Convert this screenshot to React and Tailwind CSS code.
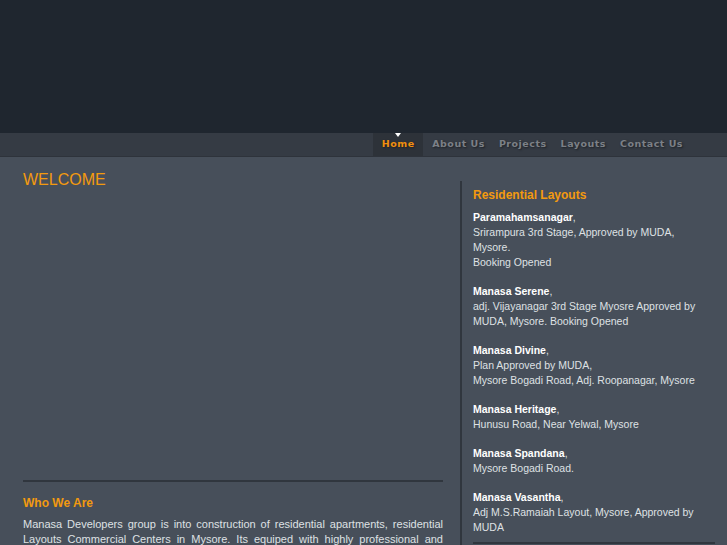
export default function App() {
  const layouts = [
    { name: 'Paramahamsanagar', lines: ['Srirampura 3rd Stage, Approved by MUDA,', 'Mysore.', 'Booking Opened'] },
    { name: 'Manasa Serene', lines: ['adj. Vijayanagar 3rd Stage Myosre Approved by MUDA, Mysore. Booking Opened'] },
    { name: 'Manasa Divine', lines: ['Plan Approved by MUDA,', 'Mysore Bogadi Road, Adj. Roopanagar, Mysore'] },
    { name: 'Manasa Heritage', lines: ['Hunusu Road, Near Yelwal, Mysore'] },
    { name: 'Manasa Spandana', lines: ['Mysore Bogadi Road.'] },
    { name: 'Manasa Vasantha', lines: ['Adj M.S.Ramaiah Layout, Mysore, Approved by MUDA'] },
  ]
  const nav = ['Home', 'About Us', 'Projects', 'Layouts', 'Contact Us']

  return (
    <div className="min-h-screen bg-[#474f5a] font-['Liberation_Sans',Arial,sans-serif]">
      <header className="h-[133px] bg-[#1f262f]" />
      <nav className="h-[24px] bg-[#353b44] border-b border-[#2e333b] flex justify-end pr-[37px]">
        {nav.map((n, i) => (
          <div
            key={n}
            className={
              'relative flex items-center h-full font-["DejaVu_Sans",sans-serif] font-bold text-[9.5px] tracking-[0.5px] [text-shadow:1px_1px_2px_#1c2026] ' +
              (i === 0 ? 'bg-[#2d3239] text-[#f0900f] w-[50px] justify-center mr-[2px]' : 'text-[#7c8086] px-[7px]')
            }
          >
            {i === 0 && (
              <span className="absolute top-0 left-1/2 -translate-x-1/2 w-0 h-0 border-l-[3px] border-r-[3px] border-t-[4px] border-l-transparent border-r-transparent border-t-white" />
            )}
            {n}
          </div>
        ))}
      </nav>
      <main className="flex">
        <section className="w-[460px] pl-[23px] pr-[17px] pt-[14px]">
          <h1 className="text-[16px] leading-[18px] text-[#f39a0f]">WELCOME</h1>
          <div className="h-[291px]" />
          <div className="h-[2px] bg-[#30363e]" />
          <h2 className="mt-[13px] text-[12px] leading-[16px] font-bold text-[#f39a0f]">Who We Are</h2>
          <p className="mt-[6px] text-[11px] leading-[15px] text-[#dfe1e4] text-justify">
            Manasa Developers group is into construction of residential apartments, residential Layouts Commercial Centers in Mysore. Its equiped with highly professional and experienced team of engineers and architects.
          </p>
        </section>
        <aside className="mt-[24px] border-l-2 border-[#30363e] pl-[11px] pr-[12px] w-[267px]">
          <h2 className="mt-[6px] text-[12px] leading-[16px] font-bold text-[#f39a0f]">Residential Layouts</h2>
          <div className="mt-[7px] flex flex-col gap-[14px] text-[10.5px] leading-[15px] text-[#dfe1e4]">
            {layouts.map(l => (
              <div key={l.name}>
                <div><span className="font-bold text-white">{l.name}</span>,</div>
                {l.lines.map(t => <div key={t}>{t}</div>)}
              </div>
            ))}
          </div>
          <div className="mt-[7px] h-[2px] bg-[#30363e]" />
        </aside>
      </main>
    </div>
  )
}
